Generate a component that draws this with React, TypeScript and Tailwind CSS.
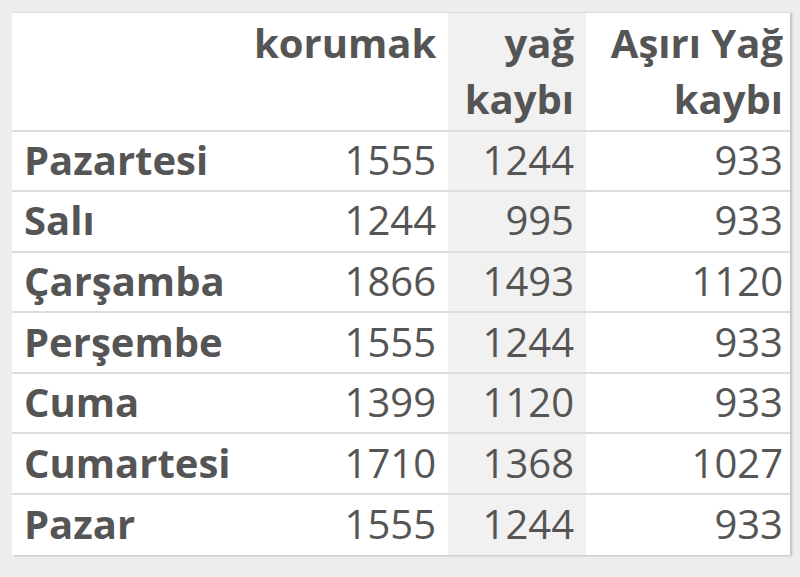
import React from 'react';

const rows = [
  { day: 'Pazartesi', a: 1555, b: 1244, c: 933 },
  { day: 'Salı', a: 1244, b: 995, c: 933 },
  { day: 'Çarşamba', a: 1866, b: 1493, c: 1120 },
  { day: 'Perşembe', a: 1555, b: 1244, c: 933 },
  { day: 'Cuma', a: 1399, b: 1120, c: 933 },
  { day: 'Cumartesi', a: 1710, b: 1368, c: 1027 },
  { day: 'Pazar', a: 1555, b: 1244, c: 933 },
];

const App = () => {
  return (
    <div className="min-h-[577px] w-[800px] bg-[#eeeeee] pt-3 pl-3" style={{ fontFamily: '"Open Sans", sans-serif' }}>
      <table className="w-[778px] table-fixed border-collapse bg-white text-[40px] leading-[56px] text-[#555555] shadow-[2px_1px_2px_rgba(0,0,0,0.2)] border-t border-[#dddddd]">
        <colgroup>
          <col className="w-[230px]" />
          <col className="w-[206px]" />
          <col className="w-[138px]" />
          <col className="w-[204px]" />
        </colgroup>
        <thead>
          <tr className="align-top">
            <th className="h-[118px] px-3 pt-[2px]"></th>
            <th className="px-3 pt-[2px] text-right font-bold">korumak</th>
            <th className="bg-[#f1f1f1] px-3 pt-[2px] text-right font-bold">yağ kaybı</th>
            <th className="pl-3 pr-[7px] pt-[2px] text-right font-bold">Aşırı Yağ kaybı</th>
          </tr>
        </thead>
        <tbody>
          {rows.map((r) => (
            <tr key={r.day} className="border-t-2 border-[#dddddd]">
              <td className="h-[60.6px] px-3 pb-[2px] font-bold">{r.day}</td>
              <td className="px-3 pb-[2px] text-right">{r.a}</td>
              <td className="bg-[#f1f1f1] px-3 pb-[2px] text-right">{r.b}</td>
              <td className="pl-3 pr-[7px] pb-[2px] text-right">{r.c}</td>
            </tr>
          ))}
        </tbody>
      </table>
    </div>
  );
};

export default App;
